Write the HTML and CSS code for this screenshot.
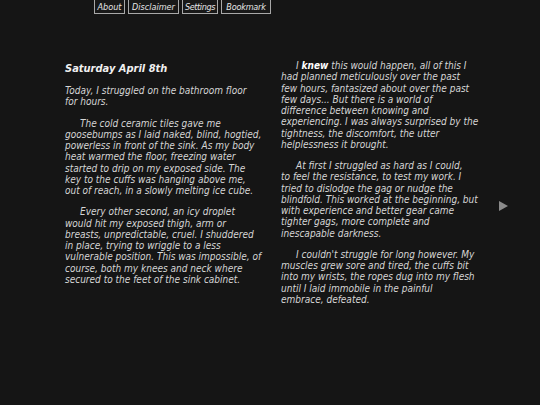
FILE: index.html
```html
<!DOCTYPE html>
<html>
<head>
<meta charset="utf-8">
<link rel="stylesheet" href="styles.css">
</head>
<body>
<nav class="menu">
  <a class="btn btn-about">About</a>
  <a class="btn btn-disclaimer">Disclaimer</a>
  <a class="btn btn-settings">Settings</a>
  <a class="btn btn-bookmark">Bookmark</a>
</nav>
<main class="pages">
  <section class="page page-left">
    <h1 class="title">Saturday April 8th</h1>
    <p class="first">Today, I struggled on the bathroom floor<br>for hours.</p>
    <p>The cold ceramic tiles gave me<br>goosebumps as I laid naked, blind, hogtied,<br>powerless in front of the sink. As my body<br>heat warmed the floor, freezing water<br>started to drip on my exposed side. The<br>key to the cuffs was hanging above me,<br>out of reach, in a slowly melting ice cube.</p>
    <p>Every other second, an icy droplet<br>would hit my exposed thigh, arm or<br>breasts, unpredictable, cruel. I shuddered<br>in place, trying to wriggle to a less<br>vulnerable position. This was impossible, of<br>course, both my knees and neck where<br>secured to the feet of the sink cabinet.</p>
  </section>
  <section class="page page-right">
    <p>I <b>knew</b> this would happen, all of this I<br>had planned meticulously over the past<br>few hours, fantasized about over the past<br>few days... But there is a world of<br>difference between knowing and<br>experiencing. I was always surprised by the<br>tightness, the discomfort, the utter<br>helplessness it brought.</p>
    <p>At first I struggled as hard as I could,<br>to feel the resistance, to test my work. I<br>tried to dislodge the gag or nudge the<br>blindfold. This worked at the beginning, but<br>with experience and better gear came<br>tighter gags, more complete and<br>inescapable darkness.</p>
    <p>I couldn't struggle for long however. My<br>muscles grew sore and tired, the cuffs bit<br>into my wrists, the ropes dug into my flesh<br>until I laid immobile in the painful<br>embrace, defeated.</p>
  </section>
</main>
<div class="next" aria-label="Next page"></div>
</body>
</html>
```
FILE: styles.css
```css
html, body {
  margin: 0;
  padding: 0;
  height: 100%;
}
body {
  background: #151515;
  color: #d6d6d6;
  font-family: "DejaVu Sans Condensed", "DejaVu Sans", sans-serif;
  font-stretch: condensed;
  font-style: italic;
  font-size: 10px;
  line-height: 11.25px;
  position: relative;
  overflow: hidden;
}
.menu {
  display: flex;
  gap: 3px;
  padding-left: 94px;
  margin-top: -1px;
}
.btn {
  display: block;
  box-sizing: border-box;
  border: 1px solid #a8a8a8;
  background: #181818;
  color: #e6e6e6;
  height: 15px;
  line-height: 14px;
  text-align: center;
  font-size: 9px;
  white-space: nowrap;
  overflow: hidden;
}
.btn-about { width: 31px; }
.btn-disclaimer { width: 51px; }
.btn-settings { width: 36px; letter-spacing: -0.4px; }
.btn-bookmark { width: 50px; letter-spacing: -0.2px; }
.pages {
  display: flex;
  gap: 17px;
  padding: 46px 0 0 65px;
}
.page {
  width: 199px;
  white-space: nowrap;
}
.page-left {
  margin-top: 2px;
}
.title {
  font-size: 11px;
  font-weight: bold;
  line-height: 14px;
  margin: 0 0 9px 0;
  color: #f0f0f0;
}
.page p {
  margin: 0 0 10px 0;
  text-indent: 15px;
}
.page p.first {
  text-indent: 0;
}
.page b {
  color: #fff;
}
.next {
  position: absolute;
  left: 499px;
  top: 201px;
  width: 0;
  height: 0;
  border-top: 5px solid transparent;
  border-bottom: 5px solid transparent;
  border-left: 9px solid #8a8a8a;
}
```
